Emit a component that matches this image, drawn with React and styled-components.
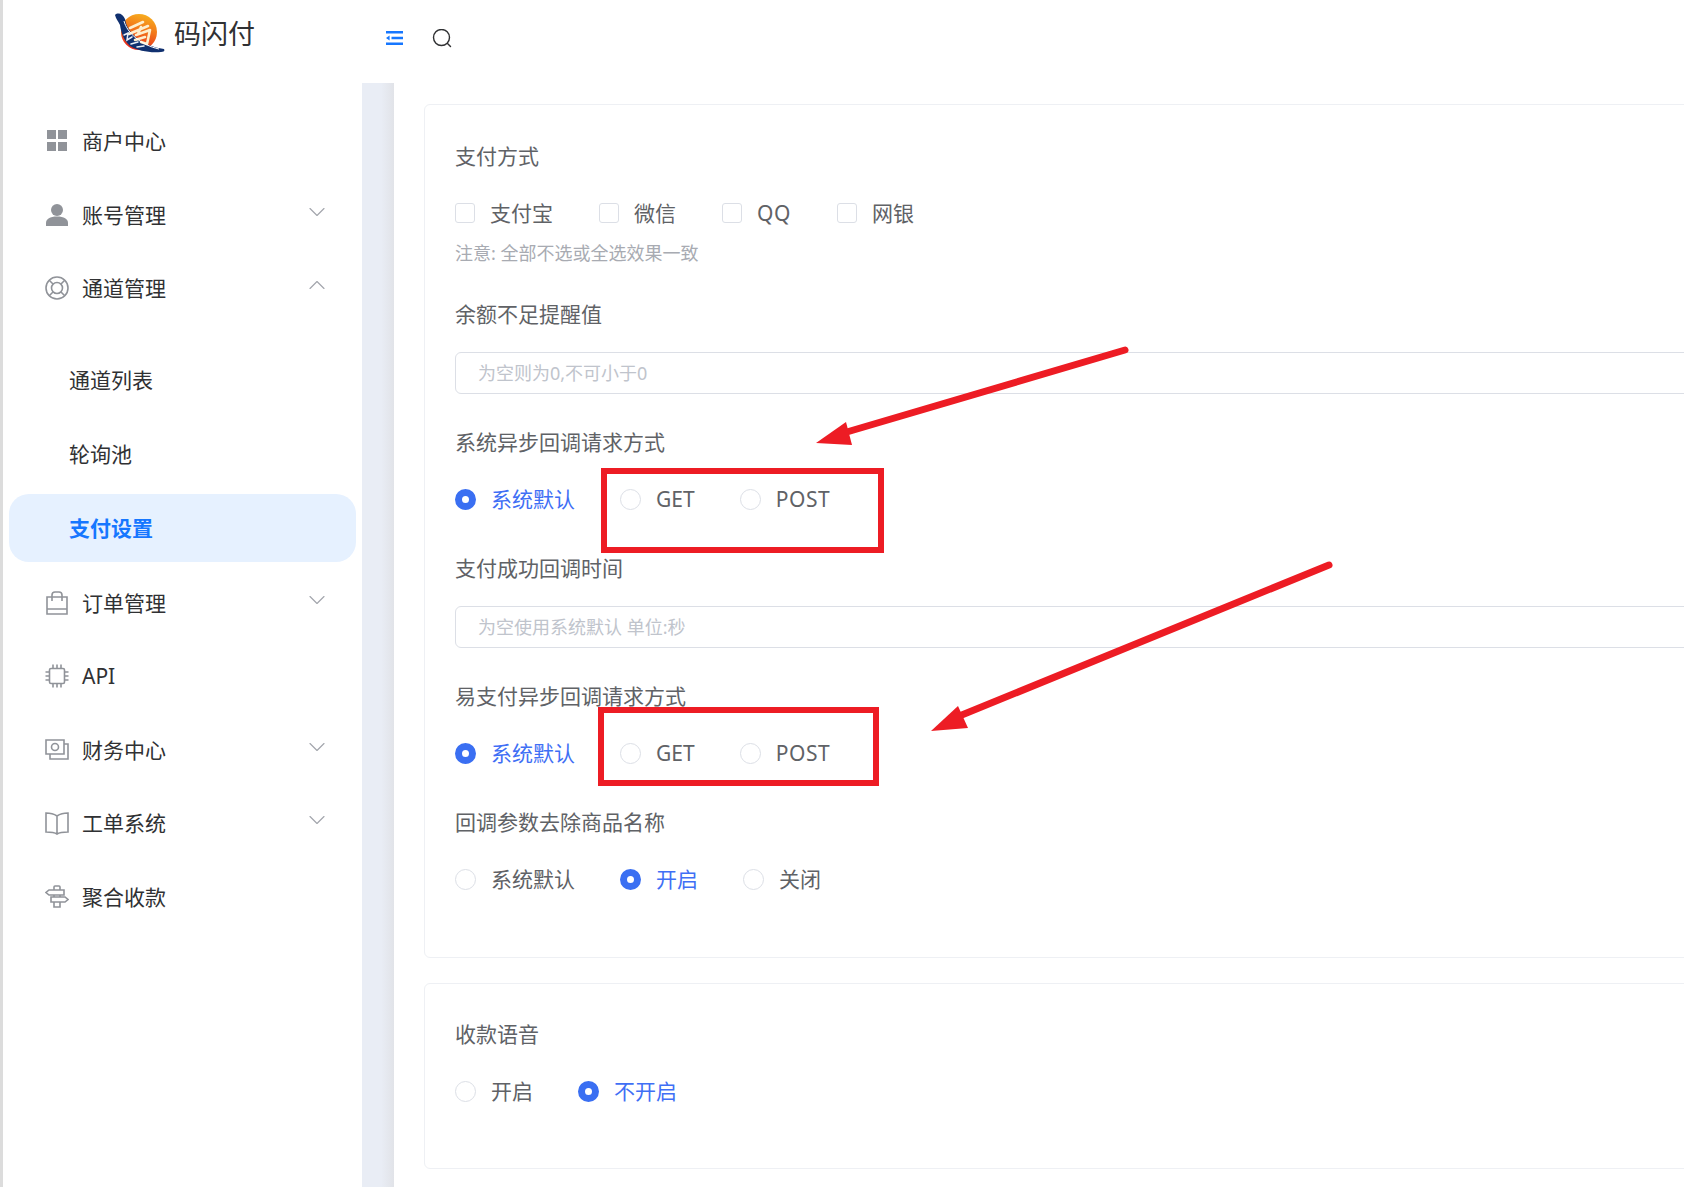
import React from 'react';
import styled, { createGlobalStyle } from 'styled-components';
import { ChevronDown, ChevronUp } from 'lucide-react';

const GlobalStyle = createGlobalStyle`
    html, body {
        margin: 0;
        padding: 0;
        background: #fff;
        overflow: hidden;
    }
    body {
        font-family: "Noto Sans", "Noto Sans CJK SC", sans-serif;
    }
`;

const Page = styled.div`
    position: relative;
    display: flex;
    width: 1684px;
    height: 1187px;
    overflow: hidden;
`;

const Sidebar = styled.aside`
    flex: none;
    width: 359px;
    border-left: 3px solid #dcdcdc;
`;

const Brand = styled.div`
    height: 83px;
    display: flex;
    align-items: flex-start;
    padding: 13px 0 0 111px;
    box-sizing: border-box;
`;

const BrandName = styled.span`
    margin: 3px 0 0 8px;
    font-size: 27px;
    line-height: 36px;
    color: #303133;
`;

const Menu = styled.nav`
    display: flex;
    flex-direction: column;
    gap: 5.6px;
    padding: 24px 6px 0;
`;

const MenuItem = styled.div`
    height: 68px;
    display: flex;
    align-items: center;
    box-sizing: border-box;
    padding: 0 25px 2px 36px;
    font-size: 21px;
    color: #303133;
    svg.icon {
        flex: none;
        width: 24px;
        height: 24px;
        margin: 2px 13px 0 0;
        color: #909399;
    }
`;

const Caret = styled.span`
    margin-left: auto;
    display: flex;
    margin-top: -4px;
    color: #a3a6ad;
`;

const SubMenu = styled.div`
    display: flex;
    flex-direction: column;
    gap: 6px;
    padding: 18px 0 1.2px;
`;

const SubItem = styled.div`
    height: 68px;
    display: flex;
    align-items: center;
    box-sizing: border-box;
    padding: 0 0 2px 60px;
    border-radius: 20px;
    font-size: 21px;
    font-weight: ${p => (p.$active ? 700 : 400)};
    color: ${p => (p.$active ? '#1677ff' : '#303133')};
    background: ${p => (p.$active ? '#e6f1ff' : 'transparent')};
`;

const Main = styled.main`
    flex: 1;
    min-width: 0;
    display: flex;
    flex-direction: column;
`;

const TopBar = styled.header`
    flex: none;
    height: 83px;
    display: flex;
    align-items: flex-start;
    gap: 29px;
    padding: 29px 0 0 24px;
    box-sizing: border-box;
`;

const Body = styled.div`
    flex: 1;
    display: flex;
    min-height: 0;
`;

const Gutter = styled.div`
    flex: none;
    width: 32px;
    background: linear-gradient(90deg, #e9edf5 0, #e9edf5 60%, #e1e3e8 100%);
`;

const Content = styled.div`
    flex: 1;
    min-width: 0;
    display: flex;
    flex-direction: column;
    gap: 25px;
    padding: 21px 0 0 30px;
`;

const Card = styled.section`
    width: 1400px;
    box-sizing: border-box;
    padding: ${p => p.$top}px 28px ${p => p.$bottom}px 30px;
    border: 1px solid #eef0f4;
    border-radius: 6px;
`;

const Label = styled.div`
    height: 30px;
    margin-top: ${p => p.$mt || 0}px;
    font-size: 21px;
    line-height: 28px;
    color: #606266;
`;

const Options = styled.div`
    height: 30px;
    margin-top: ${p => p.$mt}px;
    display: flex;
    align-items: center;
`;

const Option = styled.span`
    display: flex;
    align-items: center;
    padding-bottom: 2px;
    margin-right: ${p => (p.$box ? 46 : 45)}px;
    font-size: 21px;
    color: ${p => (p.$on ? '#3f6ff5' : '#606266')};
`;

/* latin words sit a little higher than the CJK ones in this font */
const Latin = styled.span`
    display: block;
    padding-top: 2px;
    letter-spacing: ${p => (p.$wide ? '0.6px' : '0')};
`;

const Check = styled.i`
    flex: none;
    width: 20px;
    height: 20px;
    box-sizing: border-box;
    margin: 2px 15px 0 0;
    border: 1px solid #dcdfe6;
    border-radius: 3px;
`;

const Dot = styled.i`
    flex: none;
    width: 21px;
    height: 21px;
    box-sizing: border-box;
    margin: 2px 15px 0 0;
    border-radius: 50%;
    border: ${p => (p.$on ? '7px solid #3a6ff2' : '1px solid #dcdfe6')};
    background: #fff;
`;

const Hint = styled.div`
    height: 24px;
    margin-top: 13px;
    font-size: 18px;
    line-height: 24px;
    color: #a8abb2;
`;

const TextBox = styled.div`
    height: 42px;
    margin-top: ${p => p.$mt}px;
    display: flex;
    align-items: center;
    box-sizing: border-box;
    padding: 0 0 3px 22px;
    border: 1px solid #dcdfe6;
    border-radius: 6px;
    font-size: 18px;
    color: #c0c4cc;
`;

const RedBox = styled.div`
    position: absolute;
    left: ${p => p.$x}px;
    top: ${p => p.$y}px;
    width: ${p => p.$w}px;
    height: ${p => p.$h}px;
    box-sizing: border-box;
    border: 6px solid #ed1c24;
`;

const ArrowLayer = styled.svg`
    position: absolute;
    left: 0;
    top: 0;
    pointer-events: none;
`;

const Logo = () => (
    <svg width="52" height="42" viewBox="0 0 52 42">
        <defs>
            <linearGradient id="ball" x1="0.75" y1="0" x2="0.45" y2="1">
                <stop offset="0" stopColor="#f7b21f" />
                <stop offset="0.5" stopColor="#f2701a" />
                <stop offset="1" stopColor="#e5261c" />
            </linearGradient>
        </defs>
        <circle cx="25" cy="19" r="18" fill="url(#ball)" />
        <path d="M1 2 C4 -1 9 1 11 6 C13 20 28 33 50 36 C51 38 50 39 47 39 C36 40 24 38 16 33 C9 27 7 18 6 12 C4 8 2 6 1 2 Z" fill="#10306f" />
        <path d="M16 15 L29 9 M15 21 L34 13 M27 14 L24 21 M22 22 L36 17 L33 31 L27 29 M21 27 L31 24" fill="none" stroke="#fdefcf" strokeWidth="2.6" strokeLinecap="round" strokeLinejoin="round" />
        <path d="M10 8 C13 20 27 32 45 36" fill="none" stroke="#fff" strokeWidth="1" />
        <path d="M10 22 L14 20 L13 27 L18 24 M17 31 L24 29 M23 34 L30 33" fill="none" stroke="#e6edf8" strokeWidth="1.5" strokeLinecap="round" />
    </svg>
);

const FoldIcon = () => (
    <svg width="17" height="14" viewBox="0 0 17 14" style={{ marginTop: 2 }}>
        <path d="M0 0h17v2.6H0zM0 11.4h17V14H0zM5.5 5.7H17v2.6H5.5zM0 7l3.6-2.6v5.2z" fill="#1677ff" />
    </svg>
);

const SearchIcon = () => (
    <svg width="20" height="20" viewBox="0 0 20 20" fill="none" stroke="#303133" strokeWidth="1.4" strokeLinecap="round">
        <circle cx="9.5" cy="8.5" r="8" />
        <path d="M15.5 14.5 L18.5 17.5" />
    </svg>
);

const GridIcon = () => (
    <svg className="icon" viewBox="0 0 24 24" fill="currentColor">
        <path d="M2 1h9v9H2zM13 1h9v9h-9zM2 13h9v9H2zM13 13h9v9h-9z" />
    </svg>
);

const UserIcon = () => (
    <svg className="icon" viewBox="0 0 24 24" fill="currentColor">
        <circle cx="12" cy="7" r="6" />
        <path d="M1 23v-3c0-4 4-6.500 11-6.500s11 2.500 11 6.500v3z" />
    </svg>
);

const BuoyIcon = () => (
    <svg className="icon" viewBox="0 0 24 24" fill="none" stroke="currentColor" strokeWidth="1.6">
        <circle cx="12" cy="12" r="11" />
        <circle cx="12" cy="12" r="5.500" />
        <path d="M4 4l4 4M20 4l-4 4M4 20l4-4M20 20l-4-4" />
    </svg>
);

const BagIcon = () => (
    <svg className="icon" viewBox="0 0 24 24" fill="none" stroke="currentColor" strokeWidth="1.600">
        <path d="M2 6h20v17H2zM2 18h20M7 10V4a3 3 0 0 1 3-3h4a3 3 0 0 1 3 3v6" />
    </svg>
);

const ChipIcon = () => (
    <svg className="icon" viewBox="0 0 24 24" fill="none" stroke="currentColor" strokeWidth="1.600">
        <rect x="4.500" y="4.500" width="15" height="15" rx="1.500" />
        <path d="M8 .5v4M12 .5v4M16 .5v4M8 19.500v4M12 19.500v4M16 19.500v4M.5 8h4M.5 12h4M.5 16h4M19.500 8h4M19.500 12h4M19.500 16h4" />
    </svg>
);

const CashIcon = () => (
    <svg className="icon" viewBox="0 0 24 24" fill="none" stroke="currentColor" strokeWidth="1.600">
        <path d="M1 2h18v14H1zM19 6h4v15H5v-5" />
        <circle cx="10" cy="9" r="3.500" />
    </svg>
);

const BookIcon = () => (
    <svg className="icon" viewBox="0 0 24 24" fill="none" stroke="currentColor" strokeWidth="1.600">
        <path d="M12 5C9 3 5 2 1 2v19c4 0 8 0 11 2 3-2 7-2 11-2V2c-4 0-8 1-11 3zM12 5v18" />
    </svg>
);

const SignIcon = () => (
    <svg className="icon" viewBox="0 0 24 24" fill="none" stroke="currentColor" strokeWidth="1.600">
        <path d="M9 5V2a1 1 0 0 1 1-1h4a1 1 0 0 1 1 1v3M4 5h15v5H4L1 7.500zM6 12h14l3 2.500-3 2.500H6zM9 17v5h6v-5M9 10v2M15 10v2" />
    </svg>
);

const Choice = ({ on, children }) => (
    <Option $on={on}>
        <Dot $on={on} />
        {children}
    </Option>
);

const Tick = ({ children }) => (
    <Option $box>
        <Check />
        {children}
    </Option>
);

const Down = () => <Caret><ChevronDown size={28} strokeWidth={1} /></Caret>;
const Up = () => <Caret><ChevronUp size={28} strokeWidth={1} /></Caret>;

export default function App() {
    return (
        <Page>
            <GlobalStyle />
            <Sidebar>
                <Brand>
                    <Logo />
                    <BrandName>码闪付</BrandName>
                </Brand>
                <Menu>
                    <MenuItem><GridIcon />商户中心</MenuItem>
                    <MenuItem><UserIcon />账号管理<Down /></MenuItem>
                    <MenuItem><BuoyIcon />通道管理<Up /></MenuItem>
                    <SubMenu>
                        <SubItem>通道列表</SubItem>
                        <SubItem>轮询池</SubItem>
                        <SubItem $active>支付设置</SubItem>
                    </SubMenu>
                    <MenuItem><BagIcon />订单管理<Down /></MenuItem>
                    <MenuItem><ChipIcon /><Latin>API</Latin></MenuItem>
                    <MenuItem><CashIcon />财务中心<Down /></MenuItem>
                    <MenuItem><BookIcon />工单系统<Down /></MenuItem>
                    <MenuItem><SignIcon />聚合收款</MenuItem>
                </Menu>
            </Sidebar>
            <Main>
                <TopBar>
                    <FoldIcon />
                    <SearchIcon />
                </TopBar>
                <Body>
                    <Gutter />
                    <Content>
                        <Card $top={37} $bottom={63}>
                            <Label>支付方式</Label>
                            <Options $mt={26}>
                                <Tick>支付宝</Tick>
                                <Tick>微信</Tick>
                                <Tick><Latin $wide>QQ</Latin></Tick>
                                <Tick>网银</Tick>
                            </Options>
                            <Hint>注意: 全部不选或全选效果一致</Hint>
                            <Label $mt={35}>余额不足提醒值</Label>
                            <TextBox $mt={22}>为空则为0,不可小于0</TextBox>
                            <Label $mt={34}>系统异步回调请求方式</Label>
                            <Options $mt={26}>
                                <Choice on>系统默认</Choice>
                                <Choice><Latin>GET</Latin></Choice>
                                <Choice><Latin $wide>POST</Latin></Choice>
                            </Options>
                            <Label $mt={40}>支付成功回调时间</Label>
                            <TextBox $mt={22}>为空使用系统默认 单位:秒</TextBox>
                            <Label $mt={34}>易支付异步回调请求方式</Label>
                            <Options $mt={26}>
                                <Choice on>系统默认</Choice>
                                <Choice><Latin>GET</Latin></Choice>
                                <Choice><Latin $wide>POST</Latin></Choice>
                            </Options>
                            <Label $mt={40}>回调参数去除商品名称</Label>
                            <Options $mt={26}>
                                <Choice>系统默认</Choice>
                                <Choice on>开启</Choice>
                                <Choice>关闭</Choice>
                            </Options>
                        </Card>
                        <Card $top={36} $bottom={62}>
                            <Label>收款语音</Label>
                            <Options $mt={26}>
                                <Choice>开启</Choice>
                                <Choice on>不开启</Choice>
                            </Options>
                        </Card>
                    </Content>
                </Body>
            </Main>
            <RedBox $x={601} $y={468} $w={283} $h={85} />
            <RedBox $x={598} $y={707} $w={281} $h={79} />
            <ArrowLayer width="1684" height="1187" viewBox="0 0 1684 1187">
                <path d="M1125 350 L840 434" stroke="#ed1c24" strokeWidth="7" strokeLinecap="round" />
                <path d="M816 443 L846 422 L852 445 Z" fill="#ed1c24" />
                <path d="M1329 565 L952 719" stroke="#ed1c24" strokeWidth="7" strokeLinecap="round" />
                <path d="M931 731 L958 706 L968 728 Z" fill="#ed1c24" />
            </ArrowLayer>
        </Page>
    );
}
